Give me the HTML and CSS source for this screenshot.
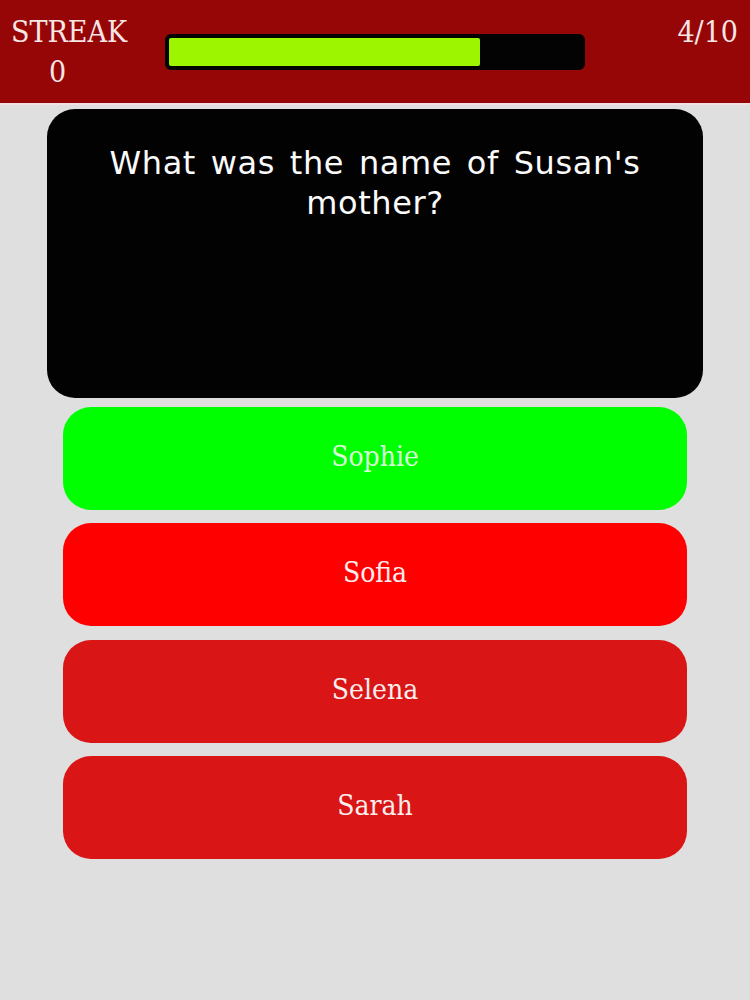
FILE: index.html
```html
<!DOCTYPE html>
<html>
<head>
<meta charset="utf-8">
<link rel="stylesheet" href="styles.css">
</head>
<body>
<header class="topbar">
  <div class="streak">
    <div class="streak-label">STREAK</div>
    <div class="streak-value">0</div>
  </div>
  <div class="progress"><div class="progress-fill" style="width: 75.5%"></div></div>
  <div class="count">4/10</div>
</header>
<main class="quiz">
  <section class="question">What was the name of Susan's mother?</section>
  <div class="answers">
    <div class="answer answer-correct">Sophie</div>
    <div class="answer answer-wrong">Sofia</div>
    <div class="answer">Selena</div>
    <div class="answer">Sarah</div>
  </div>
</main>
</body>
</html>
```

FILE: styles.css
```css
html, body {
  margin: 0;
  padding: 0;
}
body {
  background: #e0dfe0;
  width: 750px;
  height: 1000px;
  overflow: hidden;
}
.topbar {
  box-sizing: border-box;
  background: #970606;
  border-bottom: 2px solid #f0e2e2;
  height: 105px;
  display: flex;
  align-items: flex-start;
  padding-top: 12px;
  color: #f6e6e6;
  font-family: "DejaVu Serif Condensed", "DejaVu Serif", serif;
  font-size: 30px;
  line-height: 40px;
}
.streak {
  margin-left: 11px;
  width: 117px;
}
.streak-value {
  padding-left: 38px;
}
.progress {
  margin-left: 37px;
  margin-top: 22px;
  width: 420px;
  height: 36px;
  box-sizing: border-box;
  background: #030303;
  border: 4px solid #030303;
  border-radius: 6px;
}
.progress-fill {
  height: 100%;
  background: #9ef500;
  border-radius: 2px;
}
.count {
  margin-left: auto;
  margin-right: 12px;
}
.quiz {
  display: flex;
  flex-direction: column;
  align-items: center;
  padding-top: 4px;
}
.question {
  width: 656px;
  height: 289px;
  box-sizing: border-box;
  padding: 34px 30px 0;
  background: #020203;
  border-radius: 28px;
  color: #fbfbfb;
  font-family: "DejaVu Sans", sans-serif;
  font-size: 32px;
  line-height: 40px;
  letter-spacing: 0.6px;
  word-spacing: 4px;
  text-align: center;
}
.answers {
  display: flex;
  flex-direction: column;
  gap: 13.3px;
  margin-top: 9px;
}
.answer {
  width: 624px;
  height: 103px;
  box-sizing: border-box;
  padding-bottom: 4px;
  border-radius: 28px;
  background: #d91515;
  color: #fbeeee;
  display: flex;
  align-items: center;
  justify-content: center;
  font-family: "DejaVu Serif Condensed", "DejaVu Serif", serif;
  font-size: 28px;
}
.answer-correct {
  background: #00ff00;
  color: #d8ffd8;
}
.answer-wrong {
  background: #ff0000;
}
```
